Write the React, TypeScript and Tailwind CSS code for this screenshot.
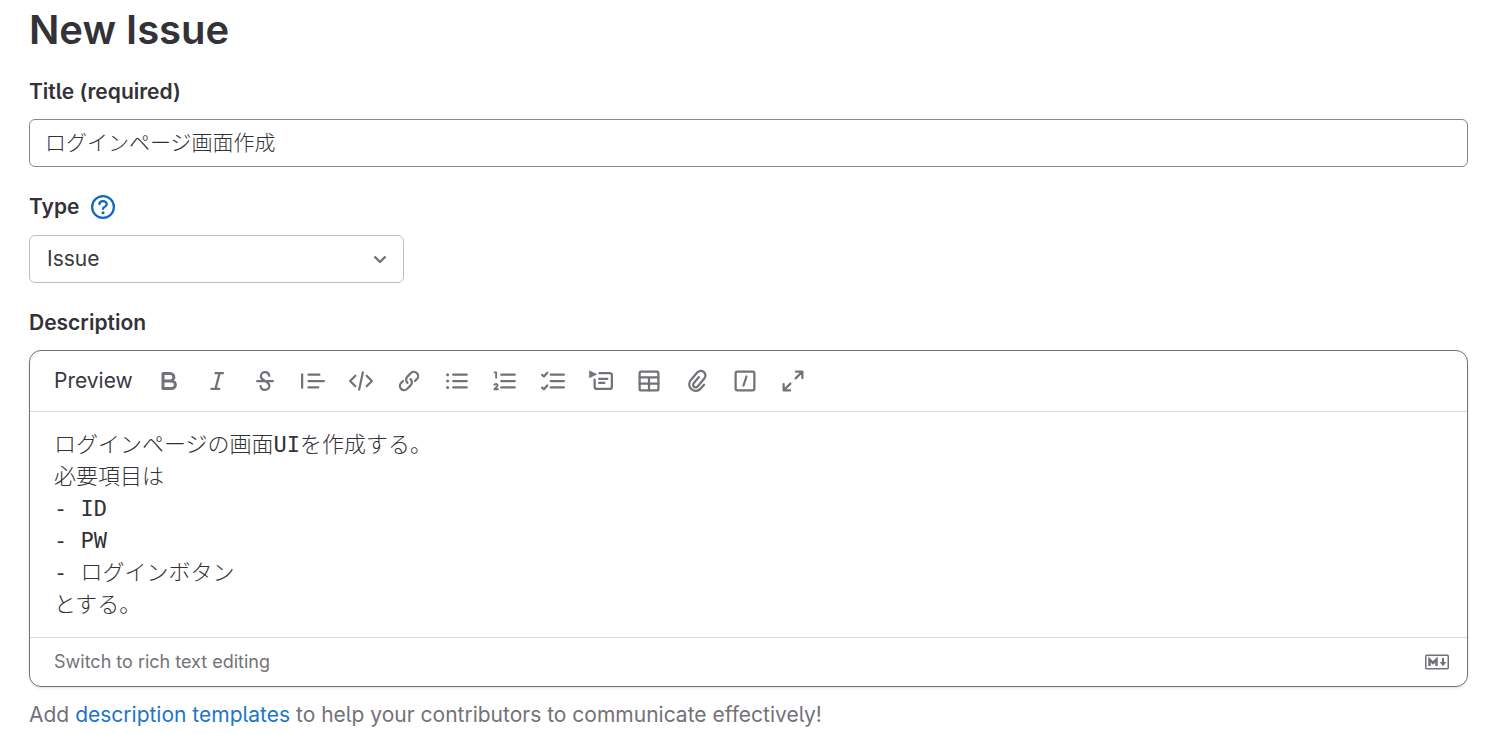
import React from 'react'

interface ToolbarItem {
  label: string
  icon: React.ReactNode
}

const listLines = 'M5.5 3.75h9M5.5 8h9M5.5 12.25h9'

const toolbarItems: ToolbarItem[] = [
  {
    label: 'Add bold text',
    icon: <path strokeWidth="2" d="M4 3h4.75a2.5 2.5 0 0 1 0 5H4m5 0h.75a2.5 2.5 0 0 1 0 5H4V3" />,
  },
  {
    label: 'Add italic text',
    icon: <path d="M7 2.75h5M4.25 13.25h5.25M9.75 2.75l-2.75 10.5" />,
  },
  {
    label: 'Add strikethrough text',
    icon: (
      <path d="M2.75 8h10.5M10.75 4.5C10.6 3 9.5 2.1 8 2.1S5.25 3.1 5.25 4.75C5.25 6.6 6.6 7.3 8 8s2.9 1.5 2.9 3.3c0 1.5-1.2 2.6-2.9 2.6s-2.8-1-2.95-2.5" />
    ),
  },
  {
    label: 'Insert a quote',
    icon: <path d="M.75 3.5v9M5 3.75h7.25M5 8h10.25M5 12.25h6.5" />,
  },
  {
    label: 'Insert code',
    icon: <path d="M4.25 4.5.75 8l3.5 3.5M11.75 4.5 15.25 8l-3.5 3.5M9.25 2.25l-2.5 11.5" />,
  },
  {
    label: 'Add a link',
    icon: (
      <path d="M7 9.25A2.9 2.9 0 0 1 6.9 5.1l2.4-2.4a2.83 2.83 0 0 1 4 4l-1.3 1.3M9 6.75a2.9 2.9 0 0 1 .1 4.15l-2.4 2.4a2.83 2.83 0 0 1-4-4L4 8" />
    ),
  },
  {
    label: 'Add a bullet list',
    icon: (
      <>
        <path d={listLines} />
        <path strokeWidth="2" d="M1.75 3.75h.01M1.75 8h.01M1.75 12.25h.01" />
      </>
    ),
  },
  {
    label: 'Add a numbered list',
    icon: (
      <>
        <path d={listLines} />
        <path strokeWidth="1.25" d="M1 2.25h1.1v3.5M.9 10.5c1-.8 2.2-.5 2.2.4 0 .8-1.4 1.6-2.2 2.6h2.4" />
      </>
    ),
  },
  {
    label: 'Add a checklist',
    icon: <path d="M6.5 3.75h8.75M6.5 8h8.75M6.5 12.25h8.75M.75 3.9l1.2 1.1L4.2 2.5M.75 12.4l1.2 1.1L4.2 11" />,
  },
  {
    label: 'Add a collapsible section',
    icon: (
      <>
        <path d="M7 2.75h6.75c.83 0 1.5.67 1.5 1.5v7.5c0 .83-.67 1.5-1.5 1.5h-8.5c-.83 0-1.5-.67-1.5-1.5V7M6.75 6.5h5.5M6.75 9.25h3.5" />
        <path fill="currentColor" strokeWidth=".5" d="M.5 1.4 5 3.5.5 5.7z" />
      </>
    ),
  },
  {
    label: 'Add a table',
    icon: (
      <>
        <rect x="1.75" y="1.75" width="12.5" height="12.5" rx="1" />
        <path d="M1.75 5.5h12.5M1.75 9.75h12.5M8 5.5v8.75" />
      </>
    ),
  },
  {
    label: 'Attach a file or image',
    icon: (
      <path
        strokeWidth="1.5"
        d="M12.7 10.5l-2.2 2.5a4.3 4.3 0 0 1-6.1.5 4.2 4.2 0 0 1-.7-5.9l4.4-5.2a3.1 3.1 0 0 1 4.4-.4 3 3 0 0 1 .4 4.3l-4.5 5.4a1.7 1.7 0 0 1-2.4.2 1.7 1.7 0 0 1-.2-2.4l3.5-4.1"
      />
    ),
  },
  {
    label: 'Add a quick action',
    icon: (
      <>
        <rect x="1.75" y="1.75" width="12.5" height="12.5" rx="1.25" />
        <path d="M9 5 7 11" />
      </>
    ),
  },
  {
    label: 'Go full screen',
    icon: <path d="M10 1.75h4.25V6M14 2 9.75 6.25M6 14.25H1.75V10M2 14l4.25-4.25" />,
  },
]

const descriptionText = `ログインページの画面UIを作成する。
必要項目は
- ID
- PW
- ログインボタン
とする。`

const labelClass = 'text-[21px] leading-8 font-semibold text-[#333238]'

function Toolbar() {
  return (
    <div className="flex h-[61px] items-center gap-[18px] border-b border-[#dcdcde] px-6">
      <button type="button" className="text-[21px] leading-8 text-[#3a383f]">
        Preview
      </button>
      <div className="flex items-center gap-3">
        {toolbarItems.map((item) => (
          <button
            key={item.label}
            type="button"
            aria-label={item.label}
            className="flex size-9 items-center justify-center rounded text-[#737278]"
          >
            <svg
              viewBox="0 0 16 16"
              className="size-6 overflow-visible"
              fill="none"
              stroke="currentColor"
              strokeWidth="1.5"
              strokeLinecap="round"
              strokeLinejoin="round"
            >
              {item.icon}
            </svg>
          </button>
        ))}
      </div>
    </div>
  )
}

export default function App() {
  const [title, setTitle] = React.useState('ログインページ画面作成')
  const [type, setType] = React.useState('issue')
  const [description, setDescription] = React.useState(descriptionText)

  return (
    <main className="bg-white pt-2 pr-[25px] pl-[29px] font-['Inter','Noto_Sans_CJK_JP',sans-serif] [font-feature-settings:'cv05']">
      <h1 className="mb-6 text-[40px] leading-[44px] font-semibold text-[#333238]">New Issue</h1>

      <form className="flex flex-col gap-6" onSubmit={(e) => e.preventDefault()}>
        <div className="flex flex-col gap-[11px]">
          <label htmlFor="issue-title" className={labelClass}>
            Title (required)
          </label>
          <input
            id="issue-title"
            type="text"
            required
            value={title}
            onChange={(e) => setTitle(e.target.value)}
            className="h-12 w-full rounded-md border border-[#89888d] px-[15px] pb-1 text-[21px] font-light text-[#333238] outline-none"
          />
        </div>

        <div className="flex flex-col gap-3">
          <div className="flex items-center gap-3">
            <label htmlFor="issue-type" className={labelClass}>
              Type
            </label>
            <button type="button" aria-label="About issue types" className="text-[#1068bf]">
              <svg viewBox="0 0 16 16" className="size-6" fill="none" stroke="currentColor" strokeWidth="1.5">
                <circle cx="8" cy="8" r="7.25" />
                <path strokeLinecap="round" strokeLinejoin="round" d="M5.6 6.1C5.7 4.8 6.7 4 8 4s2.5.8 2.5 2.1c0 1-.7 1.5-1.5 1.9-.6.3-1 .6-1 1.25" />
                <circle cx="8" cy="11.75" r="1" fill="currentColor" stroke="none" />
              </svg>
            </button>
          </div>
          <div className="relative w-[375px] max-w-full">
            <select
              id="issue-type"
              value={type}
              onChange={(e) => setType(e.target.value)}
              className="h-12 w-full appearance-none rounded-md border border-[#bfbfc3] bg-white px-[17px] text-[21px] text-[#3a383f] outline-none"
            >
              <option value="issue">Issue</option>
              <option value="incident">Incident</option>
            </select>
            <svg
              viewBox="0 0 16 16"
              className="pointer-events-none absolute top-3 right-3 size-6 text-[#737278]"
              fill="none"
              stroke="currentColor"
              strokeWidth="1.5"
              strokeLinecap="round"
              strokeLinejoin="round"
            >
              <path d="M4.75 6.75 8 10l3.25-3.25" />
            </svg>
          </div>
        </div>

        <div className="flex flex-col">
          <label htmlFor="issue-description" className={`${labelClass} mb-[11px]`}>
            Description
          </label>
          <div className="rounded-xl border border-[#737278] shadow-sm">
            <Toolbar />
            <textarea
              id="issue-description"
              rows={6}
              value={description}
              onChange={(e) => setDescription(e.target.value)}
              className="block h-[225px] w-full resize-none px-6 pt-[17px] pb-4 font-['DejaVu_Sans_Mono','Noto_Sans_CJK_JP',monospace] text-[22px] leading-8 font-light text-[#333238] outline-none"
            />
            <div className="flex h-[49px] items-center justify-between border-t border-[#dcdcde] pr-[18px] pl-6 text-[#737278]">
              <button type="button" className="text-lg leading-6">
                Switch to rich text editing
              </button>
              <a href="#markdown" aria-label="Markdown is supported">
                <svg viewBox="0 0 24 16" className="h-4 w-6" fill="none" stroke="currentColor">
                  <rect x=".75" y="1.25" width="22.5" height="13.5" rx="1" strokeWidth="1.5" />
                  <path strokeWidth="2.5" d="M4.5 12V5.5L8 9l3.5-3.5V12" />
                  <path strokeWidth="2" d="M18 4v5" />
                  <path fill="currentColor" stroke="none" d="M14.75 8h6.5L18 12.25z" />
                </svg>
              </a>
            </div>
          </div>
          <p className="mt-3 text-[21px] leading-8 text-[#737278]">
            Add{' '}
            <a href="#templates" className="text-[#1f75cb]">
              description templates
            </a>{' '}
            to help your contributors to communicate effectively!
          </p>
        </div>
      </form>
    </main>
  )
}
